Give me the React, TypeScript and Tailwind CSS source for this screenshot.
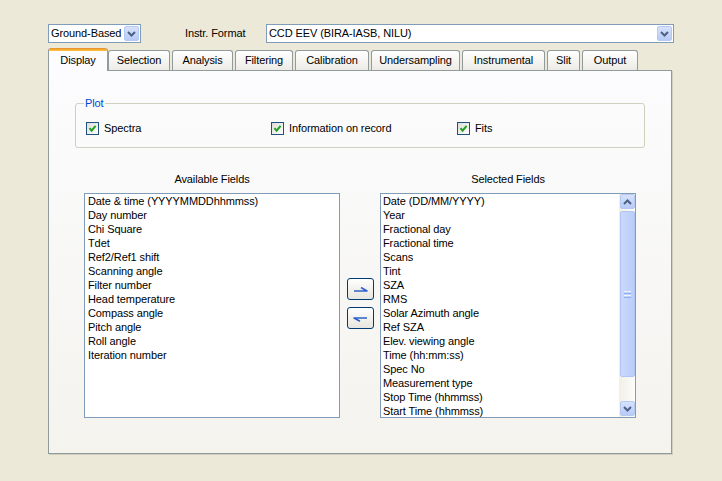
import React from 'react';

const available = [
  'Date & time (YYYYMMDDhhmmss)',
  'Day number',
  'Chi Square',
  'Tdet',
  'Ref2/Ref1 shift',
  'Scanning angle',
  'Filter number',
  'Head temperature',
  'Compass angle',
  'Pitch angle',
  'Roll angle',
  'Iteration number',
];

const selected = [
  'Date (DD/MM/YYYY)',
  'Year',
  'Fractional day',
  'Fractional time',
  'Scans',
  'Tint',
  'SZA',
  'RMS',
  'Solar Azimuth angle',
  'Ref SZA',
  'Elev. viewing angle',
  'Time (hh:mm:ss)',
  'Spec No',
  'Measurement type',
  'Stop Time (hhmmss)',
  'Start Time (hhmmss)',
];

const tabs = [
  { label: 'Selection', w: 'w-[62px]' },
  { label: 'Analysis', w: 'w-[61px]' },
  { label: 'Filtering', w: 'w-[58px]' },
  { label: 'Calibration', w: 'w-[74px]' },
  { label: 'Undersampling', w: 'w-[89px]' },
  { label: 'Instrumental', w: 'w-[83px]' },
  { label: 'Slit', w: 'w-[33px]' },
  { label: 'Output', w: 'w-[56px]' },
];

function Chevron({ up = false }: { up?: boolean }) {
  return (
    <svg width="9" height="6" viewBox="0 0 9 6">
      <path
        d={up ? 'M1 5 L4.5 1.5 L8 5' : 'M1 1 L4.5 4.5 L8 1'}
        fill="none"
        stroke="#4D6185"
        strokeWidth="2"
      />
    </svg>
  );
}

function BlueButton({ up = false, className = '' }: { up?: boolean; className?: string }) {
  return (
    <div
      className={
        'flex items-center justify-center rounded-[2px] border border-[#B6C9F2] bg-gradient-to-b from-[#D6E2FD] to-[#B7CBF7] ' +
        className
      }
    >
      <Chevron up={up} />
    </div>
  );
}

function Combo({ text, className }: { text: string; className: string }) {
  return (
    <div className={'flex h-[19px] items-center border border-[#7F9DB9] bg-white ' + className}>
      <span className="flex-1 truncate pl-[2px] leading-[17px]">{text}</span>
      <BlueButton className="mr-[1px] h-[15px] w-[15px]" />
    </div>
  );
}

function Check({ label, className = '' }: { label: string; className?: string }) {
  return (
    <div className={'flex items-center ' + className}>
      <div className="flex h-[13px] w-[13px] items-center justify-center border border-[#1C5180] bg-gradient-to-br from-[#DCDCD7] to-white">
        <svg width="9" height="9" viewBox="0 0 9 9">
          <path d="M1.5 4.2 L3.6 6.6 L7.6 1.8" fill="none" stroke="#21A121" strokeWidth="2" />
        </svg>
      </div>
      <span className="ml-[5px]">{label}</span>
    </div>
  );
}

function MoveButton({ dir }: { dir: 'right' | 'left' }) {
  return (
    <div className="flex h-[22px] w-[27px] items-center justify-center rounded-[3px] border border-[#003C74] bg-gradient-to-b from-white to-[#E6E5DE]">
      <svg width="15" height="7" viewBox="0 0 15 7">
        {dir === 'right' ? (
          <path d="M1 5 L14 5 L8 1.5" fill="none" stroke="#2C62C9" strokeWidth="1.6" strokeLinejoin="round" />
        ) : (
          <path d="M14 3 L1 3 L7 6.2" fill="none" stroke="#2C62C9" strokeWidth="1.6" strokeLinejoin="round" />
        )}
      </svg>
    </div>
  );
}

export default function App() {
  return (
    <div
      className="h-[481px] w-[722px] overflow-hidden bg-[#ECE9D8] pt-[24px] text-[11px] tracking-[-0.1px] text-black"
      style={{ fontFamily: '"Liberation Sans", Arial, sans-serif' }}
    >
      {/* Top bar */}
      <div className="flex items-center pl-[48px]">
        <Combo text="Ground-Based" className="w-[93px]" />
        <span className="ml-[44px] w-[81px]">Instr. Format</span>
        <Combo text="CCD EEV (BIRA-IASB, NILU)" className="w-[408px]" />
      </div>

      <div className="ml-[48px] mt-[5px] w-[624px]">
        {/* Tabs */}
        <div className="relative z-10 flex h-[23px] items-end">
          <div className="flex h-[23px] w-[60px] flex-col overflow-hidden rounded-t-[3px] border-x border-[#919B9C] bg-[#FCFCFE]">
            <div className="h-[3px] bg-gradient-to-b from-[#E68B2C] to-[#FFC73C]" />
            <div className="flex flex-1 items-center justify-center pb-[2px]">Display</div>
          </div>
          <div className="flex items-end gap-[2px]">
            {tabs.map((t) => (
              <div
                key={t.label}
                className={
                  'mb-[1px] flex h-[20px] items-center justify-center rounded-t-[3px] border-x border-t border-[#919B9C] bg-gradient-to-b from-white to-[#ECEBE6] ' +
                  t.w
                }
              >
                {t.label}
              </div>
            ))}
          </div>
        </div>

        {/* Panel */}
        <div className="-mt-[1px] h-[384px] border border-[#919B9C] bg-gradient-to-b from-[#FCFCFE] to-[#F4F3EE] shadow-[1px_1px_0_#D0CEBF]">
          {/* Plot group */}
          <div className="relative ml-[26px] mt-[32px] h-[45px] w-[570px] rounded-[3px] border border-[#D0D0BF] pl-[10px] pt-[16px]">
            <span className="absolute -top-[8px] left-[8px] bg-[#FBFBFC] px-[1px] leading-[14px] text-[#0046D5]">Plot</span>
            <div className="flex">
              <Check label="Spectra" className="w-[185px]" />
              <Check label="Information on record" className="w-[186px]" />
              <Check label="Fits" />
            </div>
          </div>

          {/* Field lists */}
          <div className="ml-[35px] mt-[24px] flex">
            <div className="flex w-[256px] flex-col">
              <div className="text-center leading-[14px]">Available Fields</div>
              <div className="mt-[7px] h-[225px] overflow-hidden border border-[#7F9DB9] bg-white pl-[3px]">
                {available.map((f) => (
                  <div key={f} className="whitespace-nowrap leading-[14px]">
                    {f}
                  </div>
                ))}
              </div>
            </div>

            <div className="flex w-[40px] flex-col items-center gap-[7px] pt-[106px]">
              <MoveButton dir="right" />
              <MoveButton dir="left" />
            </div>

            <div className="flex w-[256px] flex-col">
              <div className="text-center leading-[14px]">Selected Fields</div>
              <div className="mt-[7px] flex h-[225px] overflow-hidden border border-[#7F9DB9] bg-white">
                <div className="flex-1 overflow-hidden pl-[2px]">
                  {selected.map((f) => (
                    <div key={f} className="whitespace-nowrap leading-[14px]">
                      {f}
                    </div>
                  ))}
                </div>
                {/* Scrollbar */}
                <div className="flex w-[16px] flex-col bg-gradient-to-r from-[#F1EFE6] to-[#FCFCFA] pl-[1px]">
                  <BlueButton up className="h-[15px] w-[15px]" />
                  <div className="mt-[2px] flex h-[166px] w-[15px] flex-col items-center justify-center gap-[1px] rounded-[2px] border border-[#B1C5F3] bg-gradient-to-r from-[#CAD8FC] to-[#BACDF9]">
                    <div className="h-[1px] w-[7px] bg-[#EEF4FE]" />
                    <div className="h-[1px] w-[7px] bg-[#8CB0F8]" />
                    <div className="h-[1px] w-[7px] bg-[#EEF4FE]" />
                    <div className="h-[1px] w-[7px] bg-[#8CB0F8]" />
                  </div>
                  <div className="flex-1" />
                  <BlueButton className="mb-[1px] h-[15px] w-[15px]" />
                </div>
              </div>
            </div>
          </div>
        </div>
      </div>
    </div>
  );
}
